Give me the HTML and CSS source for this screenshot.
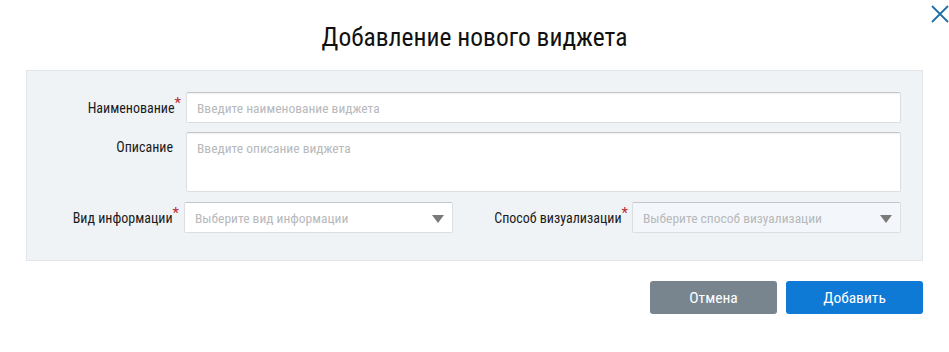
FILE: index.html
```html
<!DOCTYPE html>
<html>
<head>
    <title>Добавление нового виджета</title>
    <link rel="stylesheet" href="styles.css">
</head>
<body>
    <div class="dialog">
        <button class="close" title="Закрыть">
            <svg width="18" height="18" viewBox="0 0 18 18">
                <path d="M1 1 L17 17 M17 1 L1 17" stroke="#1f6fa6" stroke-width="1.8" fill="none"/>
            </svg>
        </button>
        <h1 class="title">Добавление нового виджета</h1>

        <div class="panel">
            <div class="row">
                <label class="label">Наименование<span class="req">*</span></label>
                <input class="field" type="text" placeholder="Введите наименование виджета">
            </div>
            <div class="row row-top">
                <label class="label label-top">Описание</label>
                <textarea class="field area" placeholder="Введите описание виджета"></textarea>
            </div>
            <div class="row row-split">
                <label class="label">Вид информации<span class="req">*</span></label>
                <div class="select">
                    <span class="placeholder">Выберите вид информации</span>
                    <span class="arrow"></span>
                </div>
                <label class="label">Способ визуализации<span class="req">*</span></label>
                <div class="select disabled">
                    <span class="placeholder">Выберите способ визуализации</span>
                    <span class="arrow"></span>
                </div>
            </div>
        </div>

        <div class="actions">
            <button class="btn btn-cancel">Отмена</button>
            <button class="btn btn-primary">Добавить</button>
        </div>
    </div>
</body>
</html>
```

FILE: styles.css
```css
body {
    margin: 0;
    font-family: "Liberation Sans Narrow", "Roboto Condensed", Roboto, sans-serif;
    background: #fff;
    color: #1b1b1b;
}
.dialog {
    position: relative;
    width: 949px;
    height: 352px;
}
.close {
    position: absolute;
    top: 5px;
    right: -1px;
    width: 20px;
    height: 20px;
    padding: 0;
    border: none;
    background: none;
    cursor: pointer;
}
.title {
    margin: 0;
    padding-top: 23px;
    height: 70px;
    box-sizing: border-box;
    text-align: center;
    font-size: 25.5px;
    font-weight: normal;
    color: #111;
    line-height: 28px;
}
.panel {
    margin: 0 26px;
    padding: 21px 21px 27px 0;
    background: #f0f3f6;
    border: 1px solid #e1e5e9;
}
.row {
    display: flex;
    align-items: center;
    margin-bottom: 9px;
}
.row-top {
    align-items: flex-start;
    margin-bottom: 10px;
}
.label {
    width: 154px;
    padding-right: 0;
    box-sizing: border-box;
    text-align: right;
    font-size: 14px;
    white-space: nowrap;
}
.label-top {
    padding-top: 7px;
    padding-right: 8px;
}
.req {
    color: #c0282d;
    font-size: 15px;
    vertical-align: 5px;
    line-height: 0;
}
.field {
    flex: 1;
    height: 31px;
    box-sizing: border-box;
    margin-left: 5px;
    padding: 0 10px;
    border: 1px solid #dcdfe2;
    border-top-color: #c4c6c9;
    border-radius: 2px;
    box-shadow: inset 0 1px 1px rgba(0, 0, 0, 0.06);
    background: #fff;
    font-family: inherit;
    font-size: 13.5px;
    color: #333;
    outline: none;
}
.field::placeholder {
    color: #b7b9bc;
}
.area {
    height: 60px;
    padding-top: 7px;
    resize: none;
}
.row-split {
    display: grid;
    grid-template-columns: 152px 274px 175px 273px;
    align-items: center;
    margin-bottom: 0;
}
.row-split .label {
    width: auto;
}
.select {
    position: relative;
    height: 31px;
    box-sizing: border-box;
    margin-left: 5px;
    padding: 0 10px;
    display: flex;
    align-items: center;
    border: 1px solid #dcdfe2;
    border-top-color: #c4c6c9;
    border-radius: 2px;
    background: #fff;
    font-size: 13.5px;
}
.select .placeholder {
    color: #b7b9bc;
}
.select.disabled {
    margin-left: 4px;
    background: #f3f6fa;
}
.arrow {
    position: absolute;
    right: 8px;
    top: 12px;
    width: 0;
    height: 0;
    border-left: 6px solid transparent;
    border-right: 6px solid transparent;
    border-top: 8px solid #7a7a7a;
}
.actions {
    display: flex;
    justify-content: flex-end;
    gap: 9px;
    margin: 20px 26px 0 0;
}
.btn {
    height: 33px;
    border: none;
    border-radius: 3px;
    color: #fff;
    font-family: inherit;
    font-size: 15.5px;
    cursor: pointer;
}
.btn-cancel {
    width: 127px;
    background: #78858f;
}
.btn-primary {
    width: 137px;
    background: #0e7ad6;
}
```
